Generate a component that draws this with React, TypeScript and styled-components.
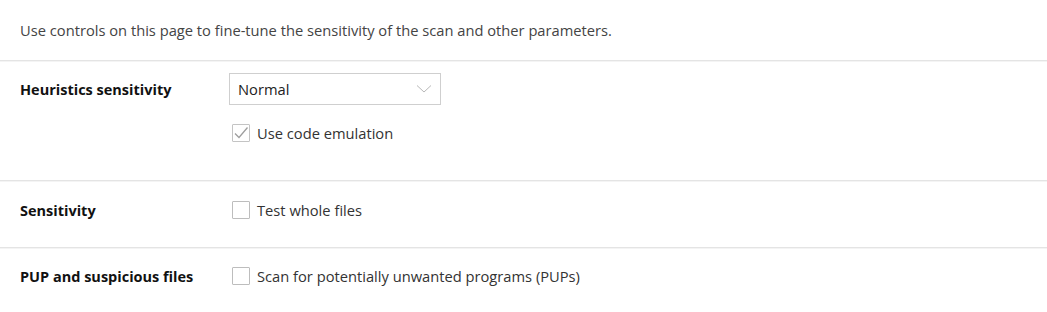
import React from 'react';
import styled, { createGlobalStyle } from 'styled-components';

const GlobalStyle = createGlobalStyle`
  html, body {
    margin: 0;
    padding: 0;
    background: #ffffff;
  }
  body {
    font-family: "Open Sans", "Liberation Sans", sans-serif;
    font-size: 14.7px;
    color: #333333;
  }
`;

const Page = styled.div`
  width: 1047px;
  height: 312px;
  background: #ffffff;
  overflow: hidden;
`;

const Intro = styled.p`
  margin: 0;
  height: 60px;
  padding: 0 20px;
  display: flex;
  align-items: center;
  color: #444444;
  border-bottom: 1px solid #e4e4e4;
  box-shadow: 0 1px 0 #f4f4f4;
`;

const Row = styled.section<{ $top: number; $bottom: number; $last?: boolean }>`
  display: grid;
  grid-template-columns: 209px 1fr;
  padding: ${(p) => p.$top}px 20px ${(p) => p.$bottom}px;
  border-bottom: ${(p) => (p.$last ? 'none' : '1px solid #e4e4e4')};
  box-shadow: ${(p) => (p.$last ? 'none' : '0 1px 0 #f4f4f4')};
  margin-bottom: ${(p) => (p.$last ? 0 : 1)}px;
`;

const Label = styled.div<{ $height: number }>`
  font-weight: 700;
  font-size: 14.5px;
  color: #111111;
  height: ${(p) => p.$height}px;
  display: flex;
  align-items: center;
  white-space: nowrap;
`;

const Controls = styled.div`
  display: flex;
  flex-direction: column;
  align-items: flex-start;
  gap: 19px;
`;

const Select = styled.div`
  width: 212px;
  height: 32px;
  box-sizing: border-box;
  border: 1px solid #cfcfcf;
  display: flex;
  align-items: center;
  justify-content: space-between;
  padding: 0 6px 0 8px;
  color: #222222;
`;

const Chevron = styled.svg`
  width: 16px;
  height: 10px;
  margin-right: 2px;
`;

const CheckRow = styled.label`
  display: flex;
  align-items: center;
  gap: 7px;
  margin-left: 3px;
  height: 18px;
  color: #333333;
  white-space: nowrap;
`;

const Box = styled.span<{ $checked?: boolean }>`
  width: 18px;
  height: 18px;
  box-sizing: border-box;
  border: 1px solid ${(p) => (p.$checked ? '#c4c4c4' : '#bdbdbd')};
  border-radius: 1px;
  background: #ffffff;
  display: flex;
  align-items: center;
  justify-content: center;
`;

const Check: React.FC<{ checked?: boolean; text: string }> = ({ checked, text }) => (
  <CheckRow>
    <Box $checked={checked}>
      {checked && (
        <svg width="16" height="14" viewBox="0 0 16 14">
          <path d="M2 7.5 L6 11.5 L14.5 1.5" fill="none" stroke="#9e9e9e" strokeWidth="1.3" />
        </svg>
      )}
    </Box>
    {text}
  </CheckRow>
);

export default function App() {
  return (
    <Page>
      <GlobalStyle />
      <Intro>Use controls on this page to fine-tune the sensitivity of the scan and other parameters.</Intro>

      <Row $top={12} $bottom={38}>
        <Label $height={32}>Heuristics sensitivity</Label>
        <Controls>
          <Select>
            Normal
            <Chevron viewBox="0 0 16 10">
              <path d="M1 1.5 L8 8 L15 1.5" fill="none" stroke="#b8b8b8" strokeWidth="1" />
            </Chevron>
          </Select>
          <Check checked text="Use code emulation" />
        </Controls>
      </Row>

      <Row $top={19} $bottom={28}>
        <Label $height={18}>Sensitivity</Label>
        <Controls>
          <Check text="Test whole files" />
        </Controls>
      </Row>

      <Row $top={18} $bottom={27} $last>
        <Label $height={18}>PUP and suspicious files</Label>
        <Controls>
          <Check text="Scan for potentially unwanted programs (PUPs)" />
        </Controls>
      </Row>
    </Page>
  );
}
